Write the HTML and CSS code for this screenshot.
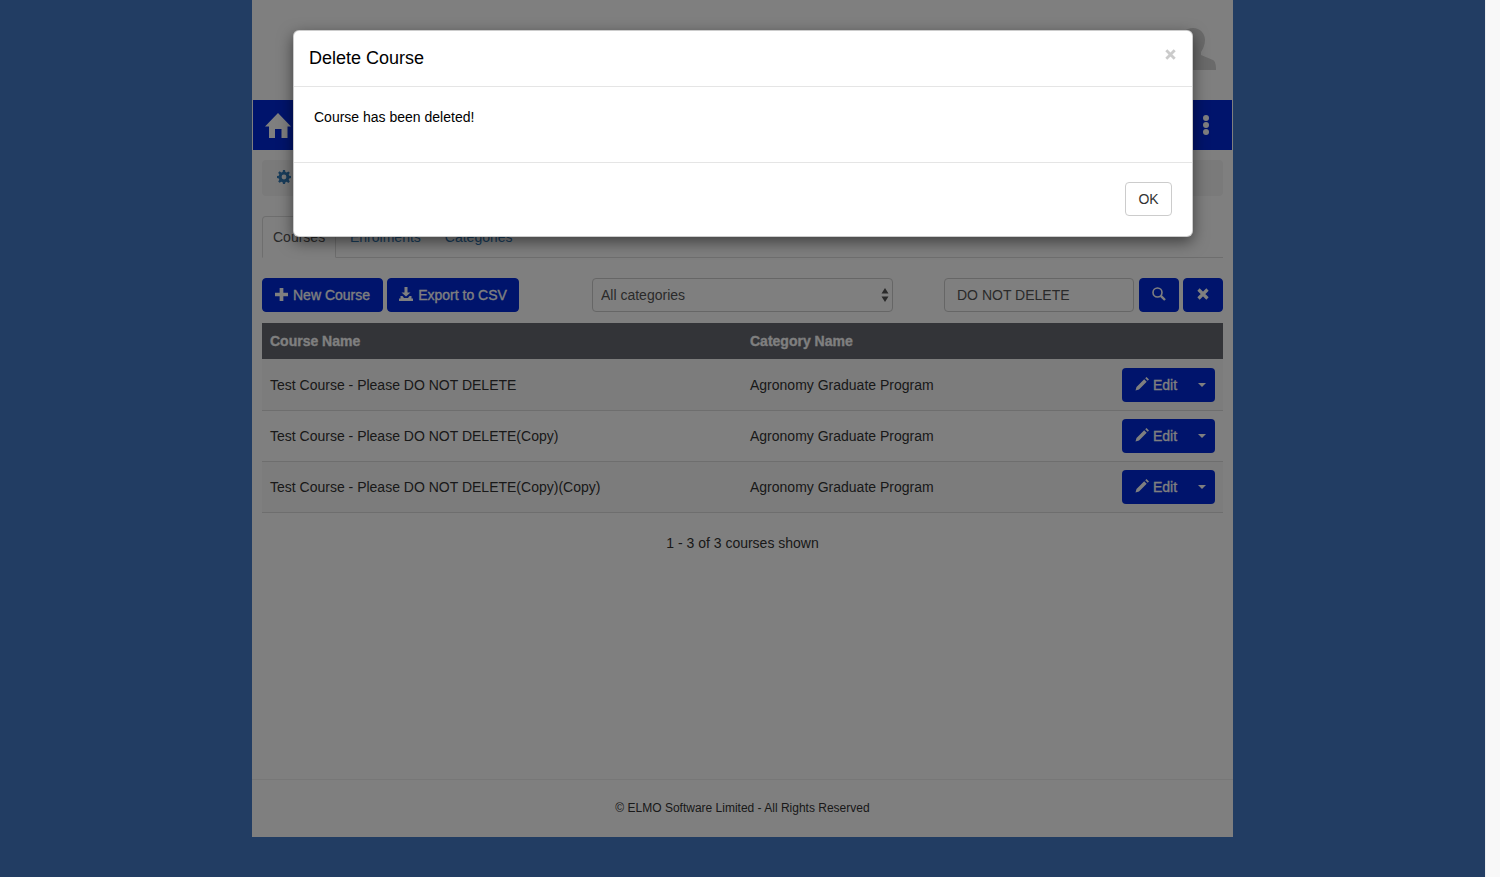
FILE: index.html
```html
<!DOCTYPE html>
<html>
<head>
  <title>Courses</title>
  <link rel="stylesheet" href="styles.css">
</head>
<body>
  <div class="viewport">
    <div class="page">
      <div class="top-bar">
        <svg class="avatar" viewBox="0 0 60 42" width="60" height="42"><path d="M37 0c7 0 12 5 12 12 0 5-2 9-4 12v3l12 5c2 1 3 4 3 10H12c0-6 1-9 3-10l12-5v-3c-2-3-4-7-4-12C23 5 30 0 37 0z"/></svg>
      </div>
      <div class="nav-bar">
        <svg class="home-icon" viewBox="0 0 26 25" width="26" height="25"><path d="M13 0l13 13.500h-3.500V25H16.500v-9h-6.500v9H4V13.500H0z"/></svg>
        <svg class="menu-icon" viewBox="0 0 6 20" width="6" height="20"><circle cx="3" cy="3" r="3"/><circle cx="3" cy="10" r="3"/><circle cx="3" cy="17" r="3"/></svg>
      </div>
      <div class="content">
        <div class="crumbs">
          <svg class="gear" viewBox="0 0 14 14" width="14" height="14"><path fill-rule="evenodd" d="M6 0h2l.4 2 1.300.5L11.400 1.400l1.400 1.400-1.100 1.700.5 1.300 1.800.3v2l-1.800.4-.5 1.300 1.100 1.700-1.400 1.400-1.700-1.100-1.300.5L8 14H6l-.4-1.800-1.300-.5-1.700 1.100-1.400-1.400 1.100-1.700-.5-1.300L0 8V6l1.800-.3.500-1.300-1.100-1.700 1.400-1.400 1.700 1.100 1.300-.5zM7 4.600a2.400 2.400 0 1 0 0 4.800 2.400 2.400 0 0 0 0-4.800z"/></svg>
        </div>
        <ul class="tabs">
          <li class="tab active">Courses</li>
          <li class="tab">Enrolments</li>
          <li class="tab">Categories</li>
        </ul>
        <div class="toolbar">
          <button class="btn btn-new">
            <svg viewBox="0 0 14 14" width="13" height="13"><path d="M5 0h4v5h5v4H9v5H5V9H0V5h5z"/></svg>
            New Course
          </button>
          <button class="btn btn-export">
            <svg viewBox="0 0 14 14" width="14" height="14"><path d="M5.500 0h3v5.500h3L7 9.500 2.500 5.500h3zM1.500 9h2l1.500 2h4l1.500-2h2v2.500H14V14H0v-2.500h1.500z"/></svg>
            Export to CSV
          </button>
          <div class="select-wrap">
            <select class="category-select"><option>All categories</option></select>
            <svg class="select-arrows" viewBox="0 0 8 14" width="8" height="14"><path d="M4 0l3.500 5.500h-7zM4 14L.5 8.500h7z"/></svg>
          </div>
          <input class="search-input" type="text" value="DO NOT DELETE">
          <button class="btn btn-icon btn-search">
            <svg viewBox="0 0 14 14" width="14" height="14"><circle cx="5.500" cy="5.500" r="4.500" fill="none" stroke-width="1.600"/><path d="M8.800 8.800L13 13" fill="none" stroke-width="2.400"/></svg>
          </button>
          <button class="btn btn-icon btn-clear">
            <svg viewBox="0 0 12 12" width="12" height="12"><path d="M1.500 1.500l9 9M10.500 1.500l-9 9" fill="none" stroke-width="3.200"/></svg>
          </button>
        </div>
        <table class="course-table">
          <thead>
            <tr><th class="col-name">Course Name</th><th>Category Name</th><th class="col-action"></th></tr>
          </thead>
          <tbody>
            <tr>
              <td>Test Course - Please DO NOT DELETE</td>
              <td>Agronomy Graduate Program</td>
              <td class="col-action">
                <div class="split-btn">
                  <svg viewBox="0 0 14 14" width="14" height="14"><path d="M11.500 0l2.500 2.500-1.300 1.300-2.500-2.500zM9.200 2.300l2.500 2.500-7.700 7.700L.5 13.500l1-3.500z"/></svg>
                  <span class="split-label">Edit</span>
                  <span class="caret"></span>
                </div>
              </td>
            </tr>
            <tr>
              <td>Test Course - Please DO NOT DELETE(Copy)</td>
              <td>Agronomy Graduate Program</td>
              <td class="col-action">
                <div class="split-btn">
                  <svg viewBox="0 0 14 14" width="14" height="14"><path d="M11.500 0l2.500 2.500-1.300 1.300-2.500-2.500zM9.200 2.300l2.500 2.500-7.700 7.700L.5 13.500l1-3.500z"/></svg>
                  <span class="split-label">Edit</span>
                  <span class="caret"></span>
                </div>
              </td>
            </tr>
            <tr>
              <td>Test Course - Please DO NOT DELETE(Copy)(Copy)</td>
              <td>Agronomy Graduate Program</td>
              <td class="col-action">
                <div class="split-btn">
                  <svg viewBox="0 0 14 14" width="14" height="14"><path d="M11.500 0l2.500 2.500-1.300 1.300-2.500-2.500zM9.200 2.300l2.500 2.500-7.700 7.700L.5 13.500l1-3.500z"/></svg>
                  <span class="split-label">Edit</span>
                  <span class="caret"></span>
                </div>
              </td>
            </tr>
          </tbody>
        </table>
        <p class="result-count">1 - 3 of 3 courses shown</p>
      </div>
      <div class="footer">© ELMO Software Limited - All Rights Reserved</div>
    </div>
    <div class="backdrop"></div>
    <div class="modal">
      <div class="modal-header">
        <h4 class="modal-title">Delete Course</h4>
        <svg class="modal-close" viewBox="0 0 11 11" width="11" height="11"><path d="M1.300 1.300l8.400 8.400M9.700 1.300l-8.400 8.400" fill="none" stroke-width="2.800"/></svg>
      </div>
      <div class="modal-body">Course has been deleted!</div>
      <div class="modal-footer">
        <button class="btn-ok">OK</button>
      </div>
    </div>
  </div>
  <div class="scroll-track"></div>
</body>
</html>
```

FILE: styles.css
```css
* {
  box-sizing: border-box;
}

html, body {
  height: 100%;
}

body {
  margin: 0;
  display: flex;
  overflow: hidden;
  font-family: "Liberation Sans", Arial, sans-serif;
  font-size: 14px;
  line-height: 20px;
  color: #333;
}

.viewport {
  position: relative;
  flex: 1;
  height: 877px;
  background: #447ac6;
}

.scroll-track {
  width: 15px;
  height: 877px;
  background: #f8f8f8;
  border-left: 1px solid #eee;
}

/* page */
.page {
  width: 981px;
  height: 837px;
  margin: 0 auto;
  background: #fff;
  display: flex;
  flex-direction: column;
}

.top-bar {
  height: 100px;
  display: flex;
  justify-content: flex-end;
  align-items: flex-start;
  padding: 28px 17px 0 0;
}

.avatar {
  fill: #d4d4d4;
}

.nav-bar {
  height: 50px;
  margin: 0 1px;
  background: #0029d8;
  display: flex;
  justify-content: space-between;
  align-items: center;
  padding: 0 23px 0 12px;
}

.home-icon,
.menu-icon {
  fill: #fff;
}

.content {
  flex: 1;
  padding: 10px 10px 0;
}

.crumbs {
  height: 36px;
  background: #f5f5f5;
  border-radius: 4px;
  display: flex;
  align-items: center;
  padding: 0 0 2px 15px;
}

.gear {
  fill: #337ab7;
}

/* tabs */
.tabs {
  list-style: none;
  margin: 20px 0 20px;
  padding: 0;
  height: 42px;
  display: flex;
  border-bottom: 1px solid #ddd;
}

.tab {
  height: 42px;
  padding: 11px 10px 0 12px;
  margin-right: 2px;
  color: #337ab7;
}

.tab.active {
  width: 74px;
  padding: 10px 0 0 10px;
  color: #555;
  background: #fff;
  border: 1px solid #ddd;
  border-bottom-color: #fff;
  border-radius: 4px 4px 0 0;
}

/* toolbar */
.toolbar {
  display: flex;
  height: 34px;
  margin-bottom: 11px;
}

.btn {
  height: 34px;
  border: 1px solid #0029d8;
  border-radius: 4px;
  background: #0029d8;
  color: #fff;
  font: inherit;
  -webkit-text-stroke: 0.3px #fff;
  display: flex;
  align-items: center;
  justify-content: center;
  gap: 5px;
  padding: 0;
}

.btn svg {
  margin-bottom: 2px;
  fill: #fff;
  stroke: #fff;
  stroke-width: 0;
}

.btn-new {
  width: 121px;
}

.btn-export {
  width: 132px;
  margin-left: 4px;
}

.btn-icon {
  width: 40px;
}

.btn-icon svg {
  stroke-width: inherit;
}

.btn-search {
  margin-left: 5px;
}

.btn-clear {
  margin-left: 4px;
}

.select-wrap {
  position: relative;
  width: 301px;
  margin-left: 73px;
}

.category-select {
  width: 100%;
  height: 34px;
  padding: 0 8px;
  appearance: none;
  border: 1px solid #ccc;
  border-radius: 4px;
  background: #fff;
  font: inherit;
  color: #555;
}

.select-arrows {
  position: absolute;
  top: 10px;
  right: 4px;
  fill: #555;
}

.search-input {
  width: 190px;
  height: 34px;
  margin-left: 51px;
  padding: 0 12px;
  border: 1px solid #ccc;
  border-radius: 4px;
  font: inherit;
  color: #555;
}

/* table */
.course-table {
  width: 100%;
  border-collapse: collapse;
}

.course-table th {
  height: 36px;
  padding: 0 8px;
  background: #666870;
  color: #fff;
  -webkit-text-stroke: 0.3px #fff;
  text-align: left;
}

.col-name {
  width: 480px;
}

.course-table td {
  height: 51px;
  padding: 0 8px;
  border-bottom: 1px solid #ddd;
}

.course-table tbody tr:first-child td {
  padding-top: 2px;
}

.course-table tbody tr:nth-child(odd) {
  background: #f9f9f9;
}

.col-action {
  width: 120px;
}

.split-btn {
  width: 93px;
  height: 34px;
  margin-left: auto;
  border-radius: 4px;
  background: #0029d8;
  color: #fff;
  -webkit-text-stroke: 0.3px #fff;
  display: flex;
  align-items: center;
  padding-left: 13px;
}

.split-btn svg {
  margin-bottom: 2px;
  fill: #fff;
}

.split-label {
  margin-left: 4px;
}

.caret {
  margin-left: 21px;
  border-top: 4px solid #fff;
  border-left: 4px solid transparent;
  border-right: 4px solid transparent;
}

.result-count {
  margin: 20px 0 0;
  text-align: center;
}

.footer {
  height: 58px;
  border-top: 1px solid #eee;
  padding-top: 18px;
  font-size: 12px;
  text-align: center;
}

/* modal over the page */
.backdrop {
  position: absolute;
  inset: 0;
  background: rgba(0, 0, 0, 0.5);
}

.modal {
  position: absolute;
  top: 30px;
  left: 293px;
  width: 900px;
  height: 207px;
  background: #fff;
  border: 1px solid rgba(0, 0, 0, 0.2);
  border-radius: 6px;
  box-shadow: 0 5px 15px rgba(0, 0, 0, 0.5);
  color: #000;
}

.modal-header {
  height: 56px;
  padding: 15px;
  border-bottom: 1px solid #e5e5e5;
  display: flex;
  justify-content: space-between;
}

.modal-title {
  margin: 0;
  font-size: 18px;
  line-height: 24px;
  font-weight: normal;
}

.modal-close {
  margin: 3px 1px 0 0;
  stroke: #000;
  opacity: 0.2;
}

.modal-body {
  height: 76px;
  padding: 20px;
  border-bottom: 1px solid #e5e5e5;
}

.modal-footer {
  padding: 19px 20px 0;
  display: flex;
  justify-content: flex-end;
}

.btn-ok {
  width: 47px;
  height: 34px;
  padding: 0;
  border: 1px solid #ccc;
  border-radius: 4px;
  background: #fff;
  font: inherit;
  color: #333;
}
```
